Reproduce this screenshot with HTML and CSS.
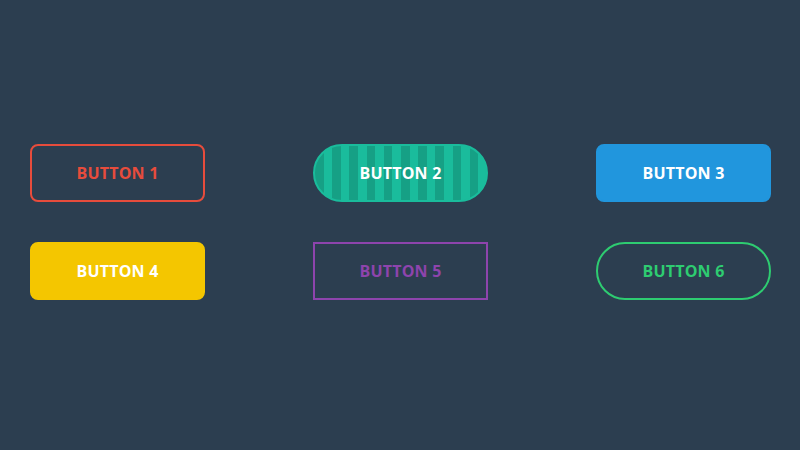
FILE: index.html
```html
<!DOCTYPE html>
<html>
<head>
<meta charset="utf-8">
<link rel="stylesheet" href="styles.css">
</head>
<body>
<div class="grid">
  <a class="btn btn-red">BUTTON 1</a>
  <a class="btn btn-stripes">BUTTON 2</a>
  <a class="btn btn-blue">BUTTON 3</a>
  <a class="btn btn-yellow">BUTTON 4</a>
  <a class="btn btn-purple">BUTTON 5</a>
  <a class="btn btn-green">BUTTON 6</a>
</div>
</body>
</html>
```
FILE: styles.css
```css
html, body {
  margin: 0;
  padding: 0;
  width: 800px;
  height: 450px;
  background: #2c3e50;
  overflow: hidden;
}
.grid {
  display: grid;
  grid-template-columns: repeat(3, 175px);
  grid-auto-rows: 58px;
  column-gap: 108px;
  row-gap: 40px;
  padding: 144px 0 0 30px;
}
.btn {
  box-sizing: border-box;
  display: flex;
  align-items: center;
  justify-content: center;
  font-family: "Open Sans", "Liberation Sans", sans-serif;
  font-weight: 700;
  font-size: 16px;
  letter-spacing: 0.2px;
  color: #ffffff;
  border: 2px solid transparent;
}
.btn-red {
  border-color: #e74c3c;
  color: #e74c3c;
  border-radius: 8px;
}
.btn-stripes {
  border-color: #1abc9c;
  border-radius: 29px;
  background: repeating-linear-gradient(90deg, #16a085 0, #16a085 8.6px, #1abc9c 8.6px, #1abc9c 17.2px);
  background-origin: padding-box;
}
.btn-blue {
  background: #2196dd;
  border-color: #2196dd;
  border-radius: 8px;
}
.btn-yellow {
  background: #f4c600;
  border-color: #f4c600;
  border-radius: 8px;
}
.btn-purple {
  border-color: #8e44ad;
  color: #8e44ad;
}
.btn-green {
  border-color: #2ecc71;
  color: #2ecc71;
  border-radius: 29px;
}
```
